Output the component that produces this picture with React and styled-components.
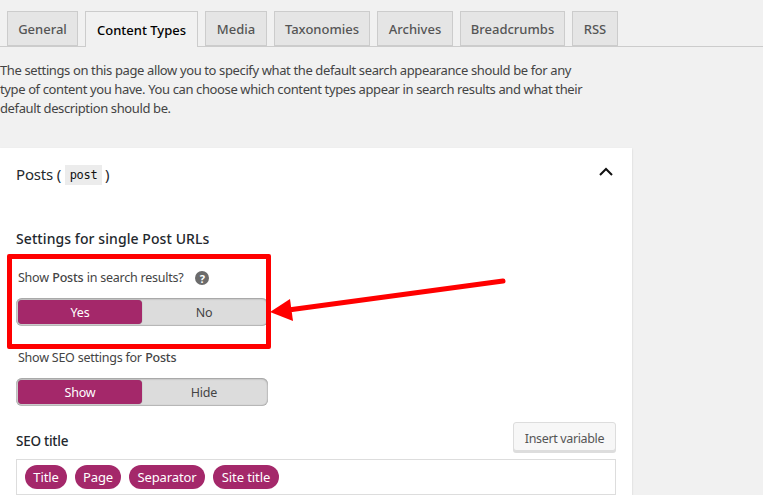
import React from "react";
import styled, { createGlobalStyle } from "styled-components";

const Global = createGlobalStyle`
  html, body { margin: 0; padding: 0; height: 495px; overflow: hidden; background: #f1f1f1; }
  body { font-family: "Noto Sans", "Open Sans", sans-serif; font-size: 13px; color: #444; }
`;
const Page = styled.div`
  position: relative; width: 763px; height: 495px; overflow: hidden;
  display: flex; flex-direction: column;
`;
const Tabs = styled.nav`
  display: flex; gap: 7px; padding: 11px 0 0 7px; height: 35px; box-sizing: content-box;
  border-bottom: 1px solid #ccc;
`;
const Tab = styled.div`
  box-sizing: border-box; height: ${p => (p.$active ? 36 : 35)}px; width: ${p => p.$w}px;
  display: flex; align-items: center; justify-content: center;
  border: 1px solid #ccc; border-bottom: ${p => (p.$active ? "none" : "1px solid #ccc")};
  background: ${p => (p.$active ? "#f1f1f1" : "#e5e5e5")};
  color: ${p => (p.$active ? "#000" : "#555")};
  font-size: 13px; font-weight: 500; letter-spacing: 0; padding-top: 1px;
`;
const Intro = styled.p`
  margin: 0; padding-top: 14px; width: 600px; height: 101px; box-sizing: border-box;
  font-size: 13px; line-height: 19px; letter-spacing: -0.38px; color: #444;
`;
const Card = styled.section`
  width: 632px; flex: 1; background: #fff; box-shadow: 0 1px 2px rgba(0,0,0,.15);
  padding: 0 16px; box-sizing: border-box;
`;
const CardHead = styled.header`
  height: 53px; display: flex; align-items: center; justify-content: space-between;
  font-size: 15px; color: #23282d; letter-spacing: -0.2px;
`;
const Code = styled.code`
  display: inline-block; height: 20px; line-height: 20px; vertical-align: middle;
  font-family: "DejaVu Sans Mono", monospace; font-size: 12px; background: #ececec; color: #111;
  padding: 0 5px; margin: 0 -1px 0 0; letter-spacing: -0.3px;
`;
const Chevron = styled.svg`
  width: 16px; height: 10px; margin-right: 2px; margin-top: -5px;
`;
const Sub = styled.h3`
  margin: 28px 0 0; font-size: 14px; font-weight: 500; line-height: 20px; color: #23282d; letter-spacing: 0.08px;
`;
const Label = styled.div`
  display: flex; align-items: center; height: 19px; margin: ${p => p.$top}px 0 0 2px;
  font-size: 12.5px; color: #444; letter-spacing: -0.24px;
  b { font-weight: 500; margin: 0 3.5px; }
`;
const Help = styled.span`
  width: 14px; height: 14px; border-radius: 50%; background: #6b6b6b; color: #fff; margin-left: 12px; margin-top: 1px;
  display: flex; align-items: center; justify-content: center; font-size: 11px; font-weight: 700; letter-spacing: 0;
`;
const Toggle = styled.div`
  width: 252px; height: 28px; margin-top: ${p => p.$top}px; box-sizing: border-box; display: flex;
  background: #dcdcdc; border-radius: 6px; padding: 2px;
  box-shadow: inset 0 1px 2px rgba(0,0,0,.25), inset 0 -1px 1px rgba(0,0,0,.12), inset 0 0 2px rgba(0,0,0,.2);
  font-size: 12.5px; letter-spacing: -0.2px;
`;
const Option = styled.div`
  flex: ${p => (p.$on ? "0 0 124px" : "1")}; display: flex; align-items: center; justify-content: center;
  border-radius: 4px;
  background: ${p => (p.$on ? "#a4286a" : "transparent")};
  color: ${p => (p.$on ? "#fff" : "#444")};
  box-shadow: ${p => (p.$on ? "0 0 1px rgba(0,0,0,.5)" : "none")};
`;
const TitleRow = styled.div`
  display: flex; align-items: flex-end; justify-content: space-between; margin-top: 16px;
`;
const TitleLabel = styled.label`
  font-size: 13.5px; font-weight: 500; color: #23282d; line-height: 20px; letter-spacing: -0.25px;
`;
const InsertButton = styled.button`
  width: 103px; height: 29px; box-sizing: border-box; border: 1px solid #ddd; border-radius: 3px;
  background: #f7f7f7; box-shadow: 0 2px 0 #ddd; color: #555; padding: 4px 0 0;
  font-family: inherit; font-size: 12.5px; letter-spacing: -0.36px;
`;
const Editor = styled.div`
  margin-top: 8px; width: 600px; height: 36px; box-sizing: border-box;
  border: 1px solid #ddd; padding: 5px 8px; display: flex; gap: 8px; background: #fff;
`;
const Pill = styled.span`
  height: 24px; width: ${p => p.$w}px; padding-bottom: 1px; border-radius: 12px; background: #a4286a; color: #fff;
  display: flex; align-items: center; justify-content: center; font-size: 13px; letter-spacing: -0.1px; box-sizing: border-box;
`;
const Highlight = styled.div`
  position: absolute; left: 7px; top: 254px; width: 264px; height: 95px; box-sizing: border-box;
  border: 5px solid #ff0000; border-radius: 2px;
`;
const Arrow = styled.svg`
  position: absolute; left: 260px; top: 270px; width: 260px; height: 60px;
`;

export default function App() {
  return (
    <Page>
      <Global />
      <Tabs>
        <Tab $w={71}>General</Tab>
        <Tab $w={113} $active>Content Types</Tab>
        <Tab $w={62}>Media</Tab>
        <Tab $w={96}>Taxonomies</Tab>
        <Tab $w={76}>Archives</Tab>
        <Tab $w={105}>Breadcrumbs</Tab>
        <Tab $w={46}>RSS</Tab>
      </Tabs>
      <Intro>
        The settings on this page allow you to specify what the default search appearance should be for any
        <br />type of content you have. You can choose which content types appear in search results and what their
        <br />default description should be.
      </Intro>
      <Card>
        <CardHead>
          <span>Posts ( <Code>post</Code> )</span>
          <Chevron viewBox="0 0 16 10"><path d="M2 8 L8 2 L14 8" fill="none" stroke="#111" strokeWidth="2" /></Chevron>
        </CardHead>
        <Sub>Settings for single Post URLs</Sub>
        <Label $top={19}>Show<b>Posts</b>in search results?<Help>?</Help></Label>
        <Toggle $top={11}><Option $on>Yes</Option><Option>No</Option></Toggle>
        <Label $top={22}>Show SEO settings for<b>Posts</b></Label>
        <Toggle $top={11}><Option $on>Show</Option><Option>Hide</Option></Toggle>
        <TitleRow>
          <TitleLabel>SEO title</TitleLabel>
          <InsertButton>Insert variable</InsertButton>
        </TitleRow>
        <Editor>
          <Pill $w={42}>Title</Pill><Pill $w={46}>Page</Pill><Pill $w={76}>Separator</Pill><Pill $w={66}>Site title</Pill>
        </Editor>
      </Card>
      <Highlight />
      <Arrow viewBox="0 0 260 60">
        <line x1="32" y1="39.5" x2="243" y2="11" stroke="#ff0000" strokeWidth="5" strokeLinecap="round" />
        <polygon points="10,42 30,29 33,51" fill="#ff0000" />
      </Arrow>
    </Page>
  );
}
